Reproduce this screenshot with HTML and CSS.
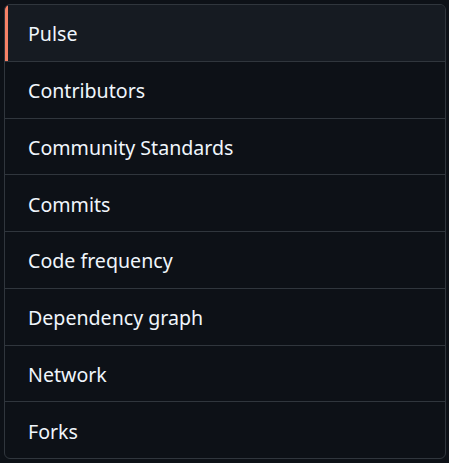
FILE: index.html
```html
<!DOCTYPE html>
<html>
<head>
<meta charset="utf-8">
<link rel="stylesheet" href="styles.css">
</head>
<body>
<nav class="menu">
  <a class="menu-item selected" href="#">Pulse</a>
  <a class="menu-item" href="#">Contributors</a>
  <a class="menu-item" href="#">Community Standards</a>
  <a class="menu-item" href="#">Commits</a>
  <a class="menu-item" href="#">Code frequency</a>
  <a class="menu-item" href="#">Dependency graph</a>
  <a class="menu-item" href="#">Network</a>
  <a class="menu-item" href="#">Forks</a>
</nav>
</body>
</html>
```
FILE: styles.css
```css
html, body {
  margin: 0;
  background: #0d1117;
}
body {
  padding: 4px 3px 4px 4px;
  font-family: "Noto Sans", "Open Sans", sans-serif;
}
.menu {
  display: flex;
  flex-direction: column;
  height: 455px;
  box-sizing: border-box;
  border: 1px solid #30363d;
  border-radius: 6px;
  overflow: hidden;
  background: #0d1117;
}
.menu-item {
  flex: 1;
  display: flex;
  align-items: center;
  position: relative;
  padding: 2px 23px 0;
  font-size: 19.6px;
  color: #f0f6fc;
  text-decoration: none;
  border-top: 1px solid #30363d;
}
.menu-item:first-child {
  border-top: 0;
}
.menu-item.selected {
  background: #161b22;
}
.menu-item.selected::before {
  content: "";
  position: absolute;
  left: 0;
  top: 0;
  bottom: 0;
  width: 3px;
  background: #f78166;
}
```
